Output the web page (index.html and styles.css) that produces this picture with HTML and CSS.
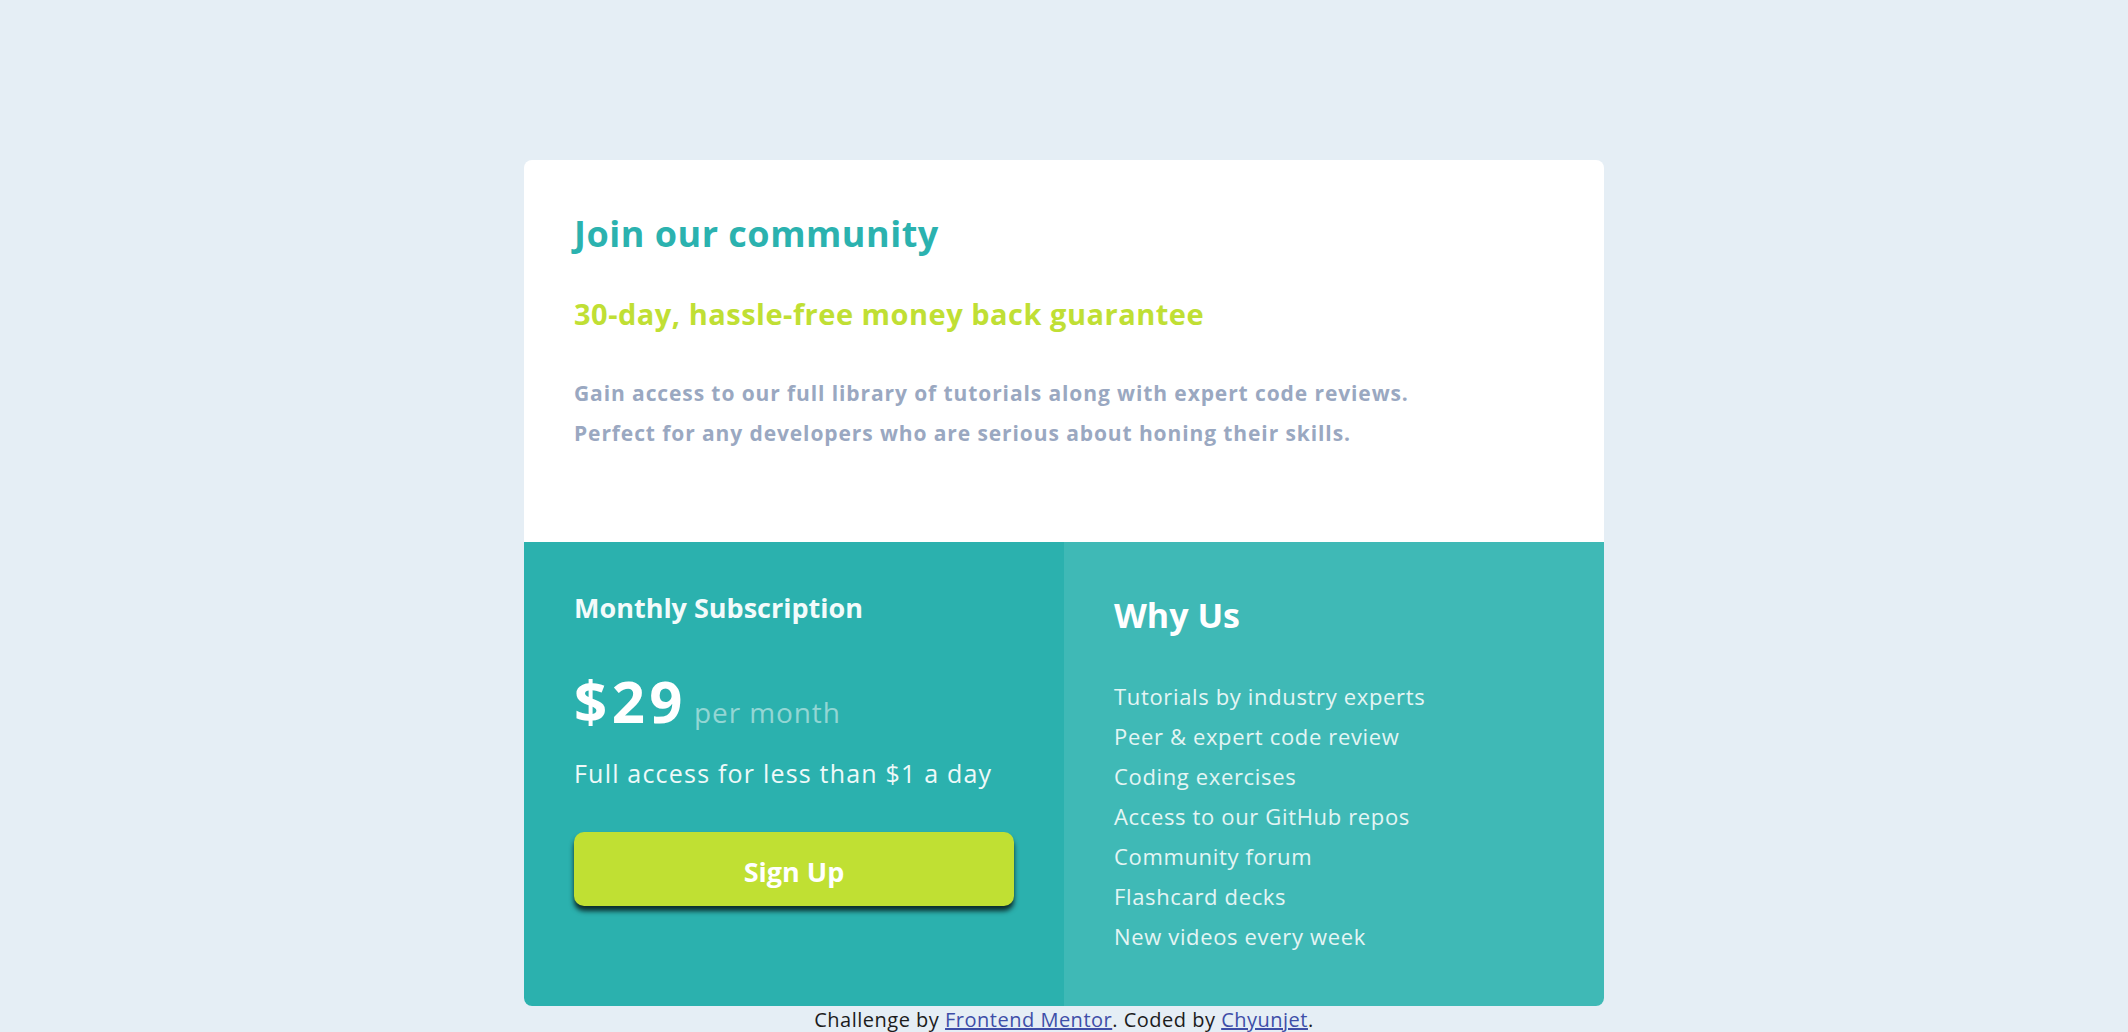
FILE: index.html
```html
<!DOCTYPE html>
<html lang="en">
<head>
<meta charset="utf-8">
<title>Single price grid component</title>
<link rel="stylesheet" href="styles.css">
</head>
<body>
<main class="page">
  <article class="card">
    <section class="intro">
      <h1 class="title">Join our community</h1>
      <h2 class="tagline">30-day, hassle-free money back guarantee</h2>
      <p class="lead">Gain access to our full library of tutorials along with expert code reviews. Perfect for any developers who are serious about honing their skills.</p>
    </section>
    <div class="details">
      <section class="plan">
        <h3 class="plan-title">Monthly Subscription</h3>
        <div class="price"><span class="amount">$29</span><span class="period">per month</span></div>
        <p class="plan-note">Full access for less than $1 a day</p>
        <button class="signup" type="button">Sign Up</button>
      </section>
      <section class="why">
        <h3 class="why-title">Why Us</h3>
        <ul class="features">
          <li>Tutorials by industry experts</li>
          <li>Peer &amp; expert code review</li>
          <li>Coding exercises</li>
          <li>Access to our GitHub repos</li>
          <li>Community forum</li>
          <li>Flashcard decks</li>
          <li>New videos every week</li>
        </ul>
      </section>
    </div>
  </article>
  <footer class="attribution">Challenge by <a href="#">Frontend Mentor</a>. Coded by <a href="#">Chyunjet</a>.</footer>
</main>
</body>
</html>
```

FILE: styles.css
```css
* { box-sizing: border-box; }

html, body {
  margin: 0;
  padding: 0;
}

body {
  background: #e5eef5;
  font-family: "Open Sans", "Liberation Sans", sans-serif;
  color: #1c1c1c;
}

.page {
  padding-top: 160px;
  display: flex;
  flex-direction: column;
  align-items: center;
}

.card {
  width: 1080px;
  border-radius: 8px;
  overflow: hidden;
  background: #ffffff;
}

.intro {
  padding: 52px 50px 89px 50px;
}

.title {
  margin: 0;
  font-size: 36px;
  line-height: 1.2;
  font-weight: 700;
  letter-spacing: 0.5px;
  color: #2bb2af;
}

.tagline {
  margin: 42px 0 0 0;
  font-size: 29px;
  line-height: 33.6px;
  font-weight: 700;
  letter-spacing: 0.5px;
  color: #c0df34;
}

.lead {
  margin: 42px 0 0 0;
  max-width: 875px;
  font-size: 21px;
  line-height: 40px;
  font-weight: 700;
  letter-spacing: 0.9px;
  color: #9aa8c1;
}

.details {
  display: grid;
  grid-template-columns: 1fr 1fr;
}

.plan {
  background: #2bb1ae;
  padding: 50px;
  display: flex;
  flex-direction: column;
  align-items: stretch;
}

.plan-title {
  margin: 0;
  font-size: 27px;
  line-height: 32.4px;
  font-weight: 700;
  color: #f3fbfb;
}

.price {
  margin-top: 49px;
  display: flex;
  align-items: baseline;
  gap: 7px;
  height: 56px;
  font-size: 56px;
  line-height: 56px;
}

.amount {
  font-size: 58px;
  line-height: 56px;
  font-weight: 700;
  color: #ffffff;
  letter-spacing: 4.5px;
}

.period {
  font-size: 28px;
  line-height: 28px;
  font-weight: 400;
  letter-spacing: 0.9px;
  color: #93d6d4;
}

.plan-note {
  margin: 30px 0 0 0;
  font-size: 25px;
  line-height: 28.8px;
  font-weight: 400;
  letter-spacing: 1.2px;
  color: #eef9f9;
}

.signup {
  margin-top: 44px;
  height: 74px;
  width: 100%;
  border: none;
  border-radius: 10px;
  background: #c0e033;
  color: #ffffff;
  font-family: "Open Sans", "Liberation Sans", sans-serif;
  font-size: 27px;
  font-weight: 700;
  padding: 6px 0 0 0;
  box-shadow: 0 5px 5px rgba(0, 0, 0, 0.75);
  cursor: pointer;
}

.why {
  background: #3fb9b6;
  padding: 53px 50px 50px 50px;
}

.why-title {
  margin: 0;
  font-size: 34px;
  line-height: 40.8px;
  font-weight: 700;
  color: #ffffff;
}

.features {
  list-style: none;
  margin: 40px 0 0 0;
  padding: 0;
  font-size: 22px;
  line-height: 40px;
  font-weight: 400;
  letter-spacing: 0.65px;
  color: #e4f5f4;
}

.attribution {
  font-size: 20px;
  line-height: 27px;
  letter-spacing: 0.5px;
  color: #1c1c1c;
  text-align: center;
}

.attribution a {
  color: #3e4ea8;
}
```
